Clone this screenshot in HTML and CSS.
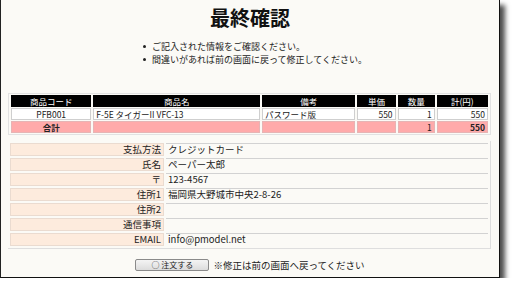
FILE: index.html
```html
<!DOCTYPE html>
<html lang="ja">
<head>
<meta charset="utf-8">
<title>最終確認</title>
<link rel="stylesheet" href="styles.css">
</head>
<body>
<div class="window">
  <h1 class="title">最終確認</h1>
  <ul class="notes">
    <li>ご記入された情報をご確認ください。</li>
    <li>間違いがあれば前の画面に戻って修正してください。</li>
  </ul>
  <table class="items">
    <colgroup>
      <col class="c1"><col class="c2"><col class="c3"><col class="c4"><col class="c5"><col class="c6">
    </colgroup>
    <tr class="head">
      <th>商品コード</th><th>商品名</th><th>備考</th><th>単価</th><th>数量</th><th>計(円)</th>
    </tr>
    <tr class="row">
      <td class="center">PFB001</td><td>F-5E タイガーII VFC-13</td><td>パスワード版</td><td class="num">550</td><td class="num">1</td><td class="num">550</td>
    </tr>
    <tr class="total">
      <td class="center bold">合計</td><td></td><td></td><td></td><td class="num">1</td><td class="num bold">550</td>
    </tr>
  </table>
  <table class="info">
    <tr><th>支払方法</th><td>クレジットカード</td></tr>
    <tr><th>氏名</th><td>ペーパー太郎</td></tr>
    <tr><th>〒</th><td>123-4567</td></tr>
    <tr><th>住所1</th><td>福岡県大野城市中央2-8-26</td></tr>
    <tr><th>住所2</th><td></td></tr>
    <tr><th>通信事項</th><td></td></tr>
    <tr><th>EMAIL</th><td>info@pmodel.net</td></tr>
  </table>
  <div class="actions">
    <button class="order" type="button">○ 注文する</button>
    <span class="hint">※修正は前の画面へ戻ってください</span>
  </div>
</div>
</body>
</html>
```

FILE: styles.css
```css
html, body {
  margin: 0;
  padding: 0;
  background: #ffffff;
}
body {
  font-family: "Noto Sans CJK JP", "Noto Sans", sans-serif;
  color: #222;
}
.window {
  width: 498px;
  height: 277px;
  background: #fbfaf6;
  border-left: 1px solid #222;
  border-right: 1px solid #111;
  border-bottom: 1px solid #111;
  box-shadow: 5px 5px 5px rgba(0, 0, 0, 0.7);
  overflow: hidden;
}
.title {
  margin: 6px 0 0 0;
  font-size: 20px;
  line-height: 24px;
  font-weight: bold;
  text-align: center;
  color: #111;
}
.notes {
  list-style: none;
  margin: 10px 0 0 142px;
  padding: 0;
  font-size: 9px;
  line-height: 13px;
}
.notes li {
  display: flex;
  align-items: center;
  height: 13px;
}
.notes li::before {
  content: "";
  width: 3px;
  height: 3px;
  border-radius: 50%;
  background: #222;
  margin-right: 6px;
}
table {
  border-collapse: separate;
  font-size: 8.5px;
  line-height: 10px;
}
.items {
  margin: 27px 0 0 7px;
  width: 483px;
  table-layout: fixed;
  border-spacing: 2px 1px;
  border: 1px solid #e2e2e2;
}
.c1 { width: 80px; }
.c2 { width: 166px; }
.c3 { width: 93px; }
.c4 { width: 38px; }
.c5 { width: 37px; }
.c6 { width: 51px; }
.items th {
  background: #000;
  color: #fff;
  font-weight: normal;
  height: 10px;
  padding: 0;
  border: 1px solid #000;
  text-align: center;
}
.items td {
  height: 10px;
  padding: 0 2px;
  border: 1px solid #cfcfcf;
  white-space: nowrap;
}
.items .row td {
  background: #fff;
}
.items .total td {
  background: #ffaaaa;
  border-color: #e6b4b4;
}
.center { text-align: center; }
.num { text-align: right; }
.bold { font-weight: bold; }
.info {
  margin: 6px 0 0 7px;
  width: 483px;
  border-spacing: 2px;
  border-right: 1px solid #dedede;
  border-bottom: 1px solid #dedede;
  font-size: 9.5px;
  line-height: 11px;
}
.info th {
  width: 150px;
  height: 11px;
  background: #fdebdd;
  border: 1px solid #eadbd0;
  font-weight: normal;
  text-align: right;
  padding: 0 2px 0 0;
}
.info td {
  height: 11px;
  border-top: 1px solid #d2d2d2;
  border-bottom: 1px solid transparent;
  padding: 0 2px;
}
.actions {
  margin-top: 10px;
  display: flex;
  justify-content: center;
  align-items: center;
  gap: 4px;
}
.order {
  width: 74px;
  height: 12px;
  padding: 0;
  font-family: "Noto Sans CJK JP", sans-serif;
  font-size: 8px;
  line-height: 10px;
  color: #222;
  background: linear-gradient(#f4f4f4, #dcdcdc);
  border: 1px solid #8a8a8a;
  border-radius: 2px;
}
.hint {
  font-size: 9.5px;
  line-height: 12px;
}
```
